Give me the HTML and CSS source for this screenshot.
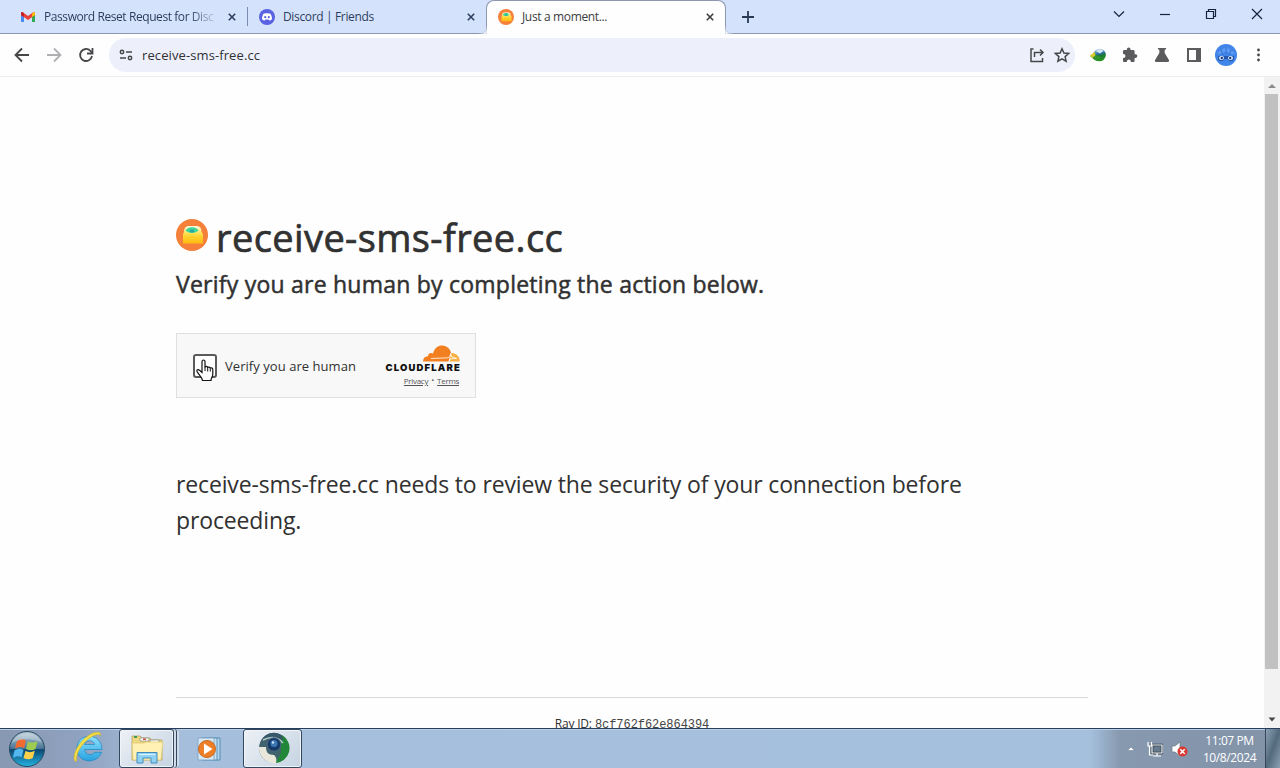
FILE: index.html
```
<!DOCTYPE html>
<html lang="en">
<head>
    <meta charset="UTF-8">
    <title>Just a moment...</title>
    <link rel="stylesheet" href="styles.css">
</head>
<body>
    <svg class="defs" width="0" height="0">
        <defs>
            <linearGradient id="gold" x1="0" y1="0" x2="0" y2="1">
                <stop offset="0" stop-color="#fffbe8"/>
                <stop offset="0.35" stop-color="#ffe566"/>
                <stop offset="0.6" stop-color="#ffd12c"/>
                <stop offset="1" stop-color="#fdba12"/>
            </linearGradient>
            <linearGradient id="globe" x1="0.3" y1="0" x2="0.6" y2="1">
                <stop offset="0" stop-color="#b9d6e8"/>
                <stop offset="0.4" stop-color="#2a6da8"/>
                <stop offset="0.6" stop-color="#1c7a2c"/>
                <stop offset="1" stop-color="#2c9a22"/>
            </linearGradient>
            <linearGradient id="orb" x1="0" y1="0" x2="0" y2="1">
                <stop offset="0" stop-color="#b5c9d6"/>
                <stop offset="0.48" stop-color="#4d7896"/>
                <stop offset="0.52" stop-color="#0b4772"/>
                <stop offset="1" stop-color="#25b5e3"/>
            </linearGradient>
            <linearGradient id="ie" x1="0" y1="0" x2="0" y2="1">
                <stop offset="0" stop-color="#8ce0fb"/>
                <stop offset="1" stop-color="#27a2e0"/>
            </linearGradient>
            <symbol id="robot" viewBox="0 0 32 32">
                <circle cx="16" cy="16" r="16" fill="#f5803a"/>
                <path d="M8 13c0-4 2-6 5-6h7c4 0 5.500 2 5.500 6l1.500 2v9.500H7V15z" fill="url(#gold)"/>
                <path d="M9.500 11.500c2-4.500 11-4.500 13 0-3 3.300-10 3.300-13 0z" fill="#3ed69c"/>
                <ellipse cx="16" cy="12" rx="2.500" ry="1.600" fill="#2aa7a0"/>
            </symbol>
            <symbol id="close" viewBox="0 0 8 8">
                <path d="M0.800 0.800l6.400 6.400M7.200 0.800L0.800 7.200" stroke="currentColor" stroke-width="1.600"/>
            </symbol>
        </defs>
    </svg>

    <div class="tabstrip">
        <div class="tab">
            <svg class="favicon" viewBox="0 0 16 16">
                <path d="M1 4v9h3V7z" fill="#4a8af4"/>
                <path d="M15 4v9h-3V7z" fill="#35a853"/>
                <path d="M1 3.500L2.500 3 8 7l5.500-4L15 3.500V6L8 11 1 6z" fill="#e94235"/>
                <path d="M12 5l1.500-2 1.500.5V6l-3 2z" fill="#fbbc04"/>
                <path d="M1 3.500L2.500 3 4 4.500V8L1 6z" fill="#c5221f"/>
            </svg>
            <span class="tab-title fade">Password Reset Request for Disc</span>
            <svg class="tab-close"><use href="#close"/></svg>
        </div>
        <div class="divider"></div>
        <div class="tab">
            <svg class="favicon" viewBox="0 0 16 16">
                <circle cx="8" cy="8" r="8" fill="#5862e3"/>
                <path d="M4.500 4.700C6 4 10 4 11.500 4.700c1.200 2 1.600 4 1.500 5.600-1 .9-2 1.200-2.700 1.300l-.7-1H6.400l-.7 1C5 11.500 4 11.200 3 10.300c-.1-1.600.3-3.600 1.500-5.600z" fill="#fff"/>
                <circle cx="6.200" cy="8.200" r="1.100" fill="#5862e3"/>
                <circle cx="9.800" cy="8.200" r="1.100" fill="#5862e3"/>
            </svg>
            <span class="tab-title">Discord | Friends</span>
            <svg class="tab-close"><use href="#close"/></svg>
        </div>
        <div class="tab active">
            <svg class="favicon"><use href="#robot"/></svg>
            <span class="tab-title">Just a moment...</span>
            <svg class="tab-close"><use href="#close"/></svg>
            <svg class="foot left" viewBox="0 0 8 8"><path d="M8 0v8H0c5 0 8-3 8-8z"/></svg>
            <svg class="foot right" viewBox="0 0 8 8"><path d="M0 0v8h8C3 8 0 5 0 0z"/></svg>
        </div>
        <svg class="new-tab" viewBox="0 0 12 12"><path d="M6 0v12M0 6h12" stroke="#2a3a55" stroke-width="1.800"/></svg>
        <div class="window-buttons">
            <svg width="12" height="12" viewBox="0 0 12 12"><path d="M1 3.500l5 5 5-5"/></svg>
            <svg width="12" height="12" viewBox="0 0 12 12"><path d="M1 6.500h10"/></svg>
            <svg width="12" height="12" viewBox="0 0 12 12"><path d="M1.500 3.500h7v7h-7zM3.500 3.500v-2h7v7h-2"/></svg>
            <svg width="12" height="12" viewBox="0 0 12 12"><path d="M1 1l10 10M11 1L1 11"/></svg>
        </div>
    </div>

    <div class="toolbar">
        <div class="nav-buttons">
            <svg viewBox="0 0 16 16"><path d="M15 8H2M8 1.500L1.500 8 8 14.500"/></svg>
            <svg class="disabled" viewBox="0 0 16 16"><path d="M1 8h13M8 1.500L14.500 8 8 14.500"/></svg>
            <svg viewBox="0 0 16 16"><path d="M14 9a6 6 0 1 1-1.600-5.200L14.300 6"/><path d="M14.500 1v5.500H9"/></svg>
        </div>
        <div class="omnibox">
            <svg class="tune" viewBox="0 0 14 12">
                <circle cx="3" cy="3" r="1.700"/><path d="M7 3h6M1 9h6"/><circle cx="11" cy="9" r="1.700"/>
            </svg>
            <span class="url">receive-sms-free.cc</span>
            <svg class="share" viewBox="0 0 16 16"><path d="M4.500 2H2v12.500h11.500V11M5.500 10V5.500h8.500M11 2.500l3 3-3 3"/></svg>
            <svg class="star" viewBox="0 0 16 16"><path d="M8 1.800l1.900 4.300 4.700.4-3.500 3.100 1 4.600L8 11.800l-4.100 2.400 1-4.600-3.500-3.100 4.700-.4z"/></svg>
        </div>
        <div class="extensions">
            <svg viewBox="0 0 16 16">
                <circle cx="9.500" cy="8" r="6.300" fill="url(#globe)"/>
                <path d="M6 4c2-2.500 6-2 7.500 0L10 6.500z" fill="#d5e6ef"/>
                <path d="M0 9l5-3.500 1 2.500 5 2-4 4-2.500-1z" fill="#31932b"/>
                <path d="M0 8.500L4.500 5l1 3-3 3z" fill="#dfcb31"/>
            </svg>
            <svg viewBox="0 0 16 16"><path d="M13.600 7.300h-1V4.500c0-.8-.6-1.400-1.400-1.400H8.500v-.9a1.800 1.800 0 0 0-3.600 0v.9H2.300C1.500 3.100 1 3.700 1 4.500v2.600h.9a2 2 0 0 1 0 3.900H1v2.700c0 .8.500 1.300 1.300 1.300h2.600v-1a2 2 0 0 1 3.900 0v1h2.500c.8 0 1.300-.5 1.300-1.300v-2.800h1a1.800 1.800 0 0 0 0-3.600z" fill="#5b5b5e"/></svg>
            <svg viewBox="0 0 16 16"><path d="M4 1h8v1.600h-1.300V6l4.200 7c.6 1-.1 2-1.100 2H2.200c-1 0-1.700-1-1.100-2l4.200-7V2.600H4z" fill="#5b5b5e"/></svg>
            <svg viewBox="0 0 16 16"><path d="M2 2h12v12H2z" fill="none" stroke="#5b5b5e" stroke-width="2"/><path d="M10 2h5v12h-5z" fill="#5b5b5e"/></svg>
            <svg class="avatar" viewBox="0 0 22 22">
                <circle cx="11" cy="11" r="11" fill="#4285e8"/>
                <path d="M2 9l9-6 9 6-2 1.500-7-3-7 3z" fill="#5b9bf3"/>
                <path d="M11 3v7M6 6l2 5M16 6l-2 5" stroke="#3570cf"/>
                <path d="M3 12h16v3c-1 3-5 3-6.500 0h-3C8 18 4 18 3 15z" fill="#2457ad"/>
                <ellipse cx="6.500" cy="14" rx="2.500" ry="2" fill="#e9f1fd"/><ellipse cx="15.500" cy="14" rx="2.500" ry="2" fill="#e9f1fd"/>
                <circle cx="6.800" cy="14" r="1.200" fill="#193c7c"/><circle cx="15.200" cy="14" r="1.200" fill="#193c7c"/>
            </svg>
            <svg viewBox="0 0 16 16" fill="#47474a"><circle cx="8.500" cy="3" r="1.400"/><circle cx="8.500" cy="8" r="1.400"/><circle cx="8.500" cy="13" r="1.400"/></svg>
        </div>
    </div>

    <div class="viewport">
        <div class="page">
            <div class="main">
                <h1><svg class="logo"><use href="#robot"/></svg><span>receive-sms-free.cc</span></h1>
                <h2>Verify you are human by completing the action below.</h2>
                <div class="widget">
                    <div class="checkbox">
                        <svg class="hand" viewBox="0 0 18 23">
                            <path d="M6 13.500V2.500c0-2 3-2 3 0v6c0-1.500 2.600-1.400 2.700.4 0-1.200 2.500-1.200 2.600.6.300-1 2.500-.8 2.500 1V15c0 3-1.800 3.500-1.800 6.500H6.500C6.300 18 2.500 15.500 1 12.500c-.6-1.800 1.200-2.500 2.500-1.200z" fill="#fff" stroke="#111" stroke-width="1.200"/>
                            <path d="M9 8v4M11.700 9v3.500M14.300 9.500v3" stroke="#111" stroke-width="1"/>
                        </svg>
                    </div>
                    <label>Verify you are human</label>
                    <div class="brand">
                        <svg class="cloud" viewBox="0 0 37 17">
                            <path d="M0 16.500c0-3 1.500-5 5-5.200-.2-2.700 2.600-4.300 5-2.800C11.500 3 15 .5 19 .5c4.500 0 8 3 9 7l-2.500 9z" fill="#f38020"/>
                            <path d="M26.500 16.500l1.700-8.500c5-.2 8.800 3.500 8.300 8.500z" fill="#faae40"/>
                            <path d="M8 13.500l17-.7c1.200-.3 2-1.500 2.700-4.300l1 3.300 5 1.700-6 .3-2 2.700" fill="none" stroke="#fff" stroke-width=".8"/>
                        </svg>
                        <span class="brand-name">CLOUDFLARE</span>
                        <span class="links"><a>Privacy</a><i>•</i><a>Terms</a></span>
                    </div>
                </div>
                <p>receive-sms-free.cc needs to review the security of your connection before proceeding.</p>
            </div>
            <div class="footer"><div><span class="ray">Ray ID:</span> <code>8cf762f62e864394</code></div></div>
        </div>
        <div class="scrollbar">
            <svg viewBox="0 0 16 16"><path d="M4 10.500l4-4 4 4z" fill="#8b8b8b"/></svg>
            <div class="thumb"></div>
            <svg class="down" viewBox="0 0 16 16"><path d="M4.500 6l3.500 4 3.500-4z" fill="#464646"/></svg>
        </div>
    </div>

    <div class="taskbar">
        <div class="start">
            <svg width="38" height="38" viewBox="0 0 38 38">
                <circle cx="19" cy="19" r="17.500" fill="url(#orb)" stroke="#29485f"/>
                <path d="M9 11c3-2 6-2.300 9-.5l-2 7.500c-3-1.600-6-1.300-9 .5z" fill="#ef6b2f"/>
                <path d="M20 11.500c3 1.600 6 1.400 9.500-.3L27.500 19c-3 1.700-6 1.600-9.500 0z" fill="#9dcc50"/>
                <path d="M6.500 20.300c3-1.900 6-2 9-.4l-2 7.300c-2.500-1.500-5.500-1.300-8.500.5z" fill="#54b8ee"/>
                <path d="M17.500 21c3 1.600 6 1.500 9.300-.2l-2 7.200c-3 1.800-6 1.500-9.300 0z" fill="#ffd14b"/>
                <path d="M4 13C8 0 30 0 34 13c-8-5-22-5-30 0z" fill="#fff" opacity=".3"/>
            </svg>
        </div>
        <div class="task ie">
            <svg width="32" height="32" viewBox="0 0 32 32">
                <path d="M30 18.500H12.500c.5 6 8 6.500 10 2.800H29.500C25 34 5 32.500 5 17.500 5 1 30 1 30 18.500zM12.500 13.500h10c-.5-5-9-5-10 0z" fill="url(#ie)" stroke="#1d86c0" stroke-width=".7"/>
                <path d="M3 30.500C-1 24 8 8 20 2.500c5-2 9.500-2 8.500 2.500-1-2.500-4-1.500-7-.3C12 9.500 3.500 21 4.500 30z" fill="#f5df45" stroke="#c5a920" stroke-width=".5"/>
            </svg>
        </div>
        <div class="task open stacked">
            <svg width="34" height="32" viewBox="0 0 34 32">
                <path d="M2 6V3h8l2 2h8l1 2h11v20H2z" fill="#f0d980" stroke="#b5a163" stroke-width=".8"/>
                <path d="M10 5h9v3h-9zM20 7h9v3h-9z" fill="#fff" stroke="#888b76" stroke-width=".7"/>
                <path d="M4 3h3v2H4z" fill="#3f9a54"/><path d="M13 5.500h3v1.500h-3z" fill="#c65240"/>
                <path d="M2 10h12l2-1h17l-2 18H3z" fill="#fff0b4" stroke="#dcc56f" stroke-width=".7"/>
                <path d="M7 30V19.500h20V30h-6v-5h-8v5z" fill="#8fd2f4" stroke="#428bb8"/>
                <path d="M9 21.500h16" stroke="#d8f3ff"/>
            </svg>
        </div>
        <div class="task media">
            <svg width="26" height="26" viewBox="0 0 26 26">
                <path d="M8 2h16v22H8z" fill="#b4d4ec" stroke="#538db5"/>
                <path d="M5 2h16v22H5z" fill="#c6e1f3" stroke="#5b93bd"/>
                <path d="M2 2h16v22H2z" fill="#d8e9f5" stroke="#86aac7"/>
                <circle cx="11" cy="13" r="8.500" fill="#ee7f26" stroke="#c96820"/>
                <path d="M8 7.500l8.500 5.500L8 18.500z" fill="#fff"/>
            </svg>
        </div>
        <div class="task open camtasia">
            <svg width="32" height="32" viewBox="0 0 32 32">
                <circle cx="16" cy="16" r="15" fill="#40636d"/>
                <path d="M24 3a15 15 0 0 1-7 28c3-5 8-10 5-17z" fill="#218638"/>
                <path d="M1 15a15 15 0 0 0 17 16c1-4 0-6-2-8-6 0-8-3-8-8z" fill="#e9e7dc"/>
                <path d="M3 9C6 3 12 0 18 1c5 1 7 4 8 7-8-4-15-3-23 1z" fill="#355968"/>
                <path d="M5 8c6-3 14-4 20 3" stroke="#b6cbd0" stroke-width="1.500" fill="none"/>
                <circle cx="16" cy="12.500" r="6.800" fill="#173b69" stroke="#4c6a80"/>
                <circle cx="16" cy="11.500" r="3.500" fill="#3d76b5"/>
                <circle cx="15" cy="10.500" r="1.200" fill="#cae3f6"/>
            </svg>
        </div>
        <div class="tray">
            <svg width="8" height="5" viewBox="0 0 8 5"><path d="M.5 4.500L4 1l3.500 3.500z" fill="#fff" stroke="#53677c" stroke-width=".4"/></svg>
            <svg width="16" height="16" viewBox="0 0 16 16">
                <path d="M5 4h10v8H5z" fill="#667b8d" stroke="#26343f" stroke-width="2.600"/>
                <path d="M5 4h10v8H5zM10 12v2.500M6 15h8M2.500 5v9H6M1 1v4h3.500V1" fill="none" stroke="#fff" stroke-width="1.200"/>
            </svg>
            <svg width="17" height="16" viewBox="0 0 17 16">
                <path d="M1 5h3l5-4v14l-5-4H1z" fill="#fff" stroke="#6c7883" stroke-width=".7"/>
                <circle cx="11.500" cy="10.500" r="5" fill="#d83931"/>
                <path d="M9.300 8.300l4.400 4.400M13.700 8.300l-4.400 4.400" stroke="#fff" stroke-width="1.500"/>
            </svg>
            <div class="clock"><span class="time">11:07 PM</span><span class="date">10/8/2024</span></div>
            <div class="show-desktop"></div>
        </div>
    </div>
</body>
</html>
```
FILE: styles.css
```
* {
    box-sizing: border-box;
}
body {
    margin: 0;
    width: 1280px;
    height: 768px;
    overflow: hidden;
    display: flex;
    flex-direction: column;
    background-color: #fefefe;
    color: #313131;
    font-family: "Open Sans", "Noto Sans", sans-serif;
}
svg {
    display: block;
    flex-shrink: 0;
}
.defs {
    position: absolute;
}

/* tabs */
.tabstrip {
    display: flex;
    height: 34px;
    padding-left: 8px;
    align-items: center;
    background-color: #d5e2fb;
    border-bottom: 1px solid #8c98b0;
}
.tab {
    display: flex;
    align-items: center;
    width: 239px;
    height: 33px;
    padding: 0 11px 0 12px;
    color: #2c3e5e;
    font-size: 12px;
}
.divider {
    width: 1px;
    height: 19px;
    background-color: #7b8cae;
}
.divider + .tab {
    padding-left: 11px;
    width: 238px;
}
.favicon {
    width: 16px;
    height: 16px;
    margin-right: 8px;
}
.tab-title {
    flex: 1;
    white-space: nowrap;
    letter-spacing: -0.350px;
}
.tab-title.fade {
    flex: none;
    width: 171px;
    margin-right: auto;
    letter-spacing: -0.420px;
    -webkit-mask-image: linear-gradient(to right, #000 145px, transparent 175px);
    mask-image: linear-gradient(to right, #000 145px, transparent 175px);
}
.tab-close {
    width: 8px;
    height: 8px;
}
.tab.active {
    position: relative;
    width: 240px;
    height: 34px;
    align-self: flex-start;
    padding: 0 11px 2px;
    color: #3c3c3f;
    background-color: #fefefe;
    border: 1px solid #8c98b0;
    border-bottom: none;
    border-radius: 8px 8px 0 0;
}
.foot {
    position: absolute;
    bottom: 0;
    width: 8px;
    height: 8px;
    fill: #fefefe;
}
.foot.left {
    left: -8px;
}
.foot.right {
    right: -8px;
}
.foot path {
    stroke: #a5b0c6;
    stroke-width: 0.600;
}
.new-tab {
    width: 12px;
    height: 12px;
    margin-left: 16px;
}
.window-buttons {
    display: flex;
    gap: 34px;
    margin: -5px 17px 0 auto;
    fill: none;
    stroke: #17233d;
    stroke-width: 1.200;
}

/* toolbar */
.toolbar {
    display: flex;
    align-items: center;
    height: 43px;
    padding: 0 14px;
    background-color: #fefefe;
    border-bottom: 1px solid #ececec;
}
.nav-buttons {
    display: flex;
    gap: 16px;
    fill: none;
    stroke: #47474a;
    stroke-width: 1.800;
}
.nav-buttons svg {
    width: 16px;
    height: 16px;
}
.nav-buttons .disabled {
    stroke: #b0b0b4;
}
.omnibox {
    display: flex;
    align-items: center;
    width: 966px;
    height: 34px;
    margin-left: 15px;
    padding: 0 5px 0 10px;
    border-radius: 17px;
    background-color: #edf0fb;
    fill: none;
    stroke: #47474a;
    stroke-width: 1.500;
}
.tune {
    width: 14px;
    height: 12px;
}
.url {
    flex: 1;
    margin-left: 9px;
    color: #303034;
    font-size: 13px;
    letter-spacing: 0.100px;
}
.share, .star {
    width: 16px;
    height: 16px;
}
.star {
    margin-left: 9px;
}
.extensions {
    display: flex;
    align-items: center;
    gap: 16px;
    margin-left: 15px;
}
.extensions svg {
    width: 16px;
    height: 16px;
}
.extensions .avatar {
    width: 22px;
    height: 22px;
    margin: 0 -3px;
}

/* page */
.viewport {
    display: flex;
    height: 651px;
    overflow: hidden;
}
.page {
    flex: 1;
    padding: 0 176px;
}
.main {
    height: 620px;
    padding-top: 128px;
}
h1 {
    display: flex;
    align-items: center;
    margin: 0;
    height: 64px;
    font-size: 38px;
    font-weight: 500;
    line-height: 64px;
    letter-spacing: 0.400px;
    -webkit-text-stroke: 0.700px #313131;
}
.logo {
    width: 32px;
    height: 32px;
    margin: -4px 8px 0 0;
}
h2 {
    margin: -1px 0 0;
    font-size: 23px;
    font-weight: 500;
    line-height: 32px;
    letter-spacing: 0.230px;
    white-space: nowrap;
    -webkit-text-stroke: 0.500px #313131;
}
.widget {
    display: flex;
    align-items: center;
    width: 300px;
    height: 65px;
    margin-top: 33px;
    padding: 0 15px 0 16px;
    background-color: #f8f8f8;
    border: 1px solid #e0e0e0;
}
.checkbox {
    position: relative;
    width: 24px;
    height: 24px;
    border: 2px solid #5a5a5a;
    border-radius: 3px;
    background-color: #fff;
}
.hand {
    position: absolute;
    left: 1px;
    top: 3px;
    width: 18px;
    height: 23px;
}
.widget label {
    margin-left: 8px;
    font-size: 13px;
    white-space: nowrap;
    letter-spacing: 0.050px;
}
.brand {
    display: flex;
    flex-direction: column;
    align-items: flex-end;
    margin-left: auto;
}
.cloud {
    width: 37px;
    height: 17px;
}
.brand-name {
    color: #111;
    font-family: Inter, sans-serif;
    font-size: 9.500px;
    font-weight: 900;
    line-height: 11px;
    letter-spacing: 1.150px;
    margin-right: -1px;
}
.links {
    display: flex;
    margin: 2px 1px 0 0;
    color: #555;
    font-size: 8px;
    line-height: 11px;
    letter-spacing: -0.300px;
}
.links a {
    text-decoration: underline;
}
.links i {
    width: 9px;
    font-size: 7px;
    font-style: normal;
    text-align: center;
}
.main p {
    margin: 68px 0 0;
    font-size: 23px;
    line-height: 36px;
    letter-spacing: -0.140px;
}
.footer {
    border-top: 1px solid #d9d9d9;
    padding-top: 17px;
    font-size: 12px;
    line-height: 18px;
    text-align: center;
}
.footer .ray {
    letter-spacing: -0.200px;
}
.footer code {
    font-family: "Liberation Mono", monospace;
    font-size: 12px;
    letter-spacing: -0.060px;
    color: #444;
}
.scrollbar {
    width: 16px;
    height: 651px;
    display: flex;
    flex-direction: column;
    background-color: #f2f2f2;
}
.scrollbar svg {
    width: 16px;
    height: 17px;
}
.thumb {
    width: 13px;
    height: 575px;
    margin-left: 1px;
    background-color: #c1c1c1;
}
.scrollbar .down {
    margin-top: auto;
}

/* taskbar */
.taskbar {
    display: flex;
    height: 40px;
    border-top: 1px solid #263f5e;
    box-shadow: inset 0 1px #bdd0e4;
    background: linear-gradient(to right, #8798b2 0, #8fa2bf 80px, #a5bedb 160px, #a5c0dd 1090px, #8799af 1120px, #8293a8 1280px);
}
.start {
    width: 58px;
    padding: 1px 0 0 8px;
}
.task {
    display: flex;
    align-items: center;
    justify-content: center;
    width: 58px;
    height: 39px;
    margin-right: 3px;
}
.task.ie {
    padding: 0 0 3px 1px;
}
.task.open {
    background: linear-gradient(135deg, #edf1f6, #c5d3e2);
    border: 1px solid #33475f;
    border-radius: 3px;
    box-shadow: inset 0 0 0 1px #eff4f9;
}
.task.stacked {
    width: 55px;
    margin-right: 5px;
    box-shadow: inset 0 0 0 1px #eff4f9, 2px 0 #cfdbe8, 3px 0 #33475f, 5px 0 #cfdbe8, 5px 0 #33475f;
}
.task.media {
    width: 56px;
    margin-right: 8px;
    padding-left: 3px;
}
.task.camtasia {
    width: 59px;
    padding: 0 0 2px 2px;
}
.tray {
    display: flex;
    align-items: center;
    margin-left: auto;
    gap: 8px;
}
.tray svg:first-child {
    margin-right: 4px;
}
.clock {
    display: flex;
    flex-direction: column;
    align-items: center;
    width: 68px;
    padding-right: 1px;
    color: #fff;
    font-size: 12px;
    line-height: 17px;
    letter-spacing: -0.400px;
}
.show-desktop {
    width: 15px;
    height: 39px;
    margin-left: -7px;
    border-left: 1px solid #33475b;
    background: linear-gradient(110deg, #8ba0b3, #536a7d 50%, #8ca0b1);
}
```
